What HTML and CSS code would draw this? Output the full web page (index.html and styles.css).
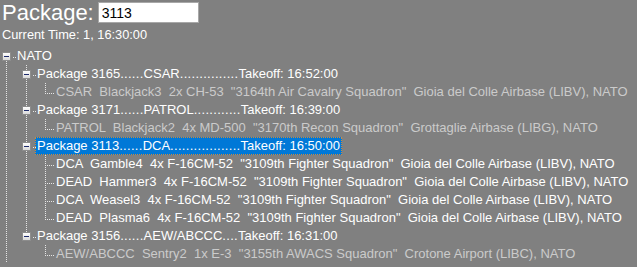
FILE: index.html
```html
<!DOCTYPE html>
<html>
<head>
<meta charset="utf-8">
<link rel="stylesheet" href="styles.css">
</head>
<body>
<div class="header">
  <span class="title">Package:</span>
  <input class="pkg-input" type="text" value="3113">
</div>
<div class="time">Current Time: 1, 16:30:00</div>
<div class="tree">
  <div class="row">
    <span class="own d0 down"><span class="box"></span></span>
    <span class="label">NATO</span>
  </div>

  <div class="row">
    <span class="anc d0 l"></span>
    <span class="own d1 up down"><span class="box"></span></span>
    <span class="label">Package 3165<span class="dots">......</span>CSAR<span class="dots">...............</span>Takeoff: 16:52:00</span>
  </div>
  <div class="row">
    <span class="anc d0 l"></span><span class="anc d1 l"></span>
    <span class="own d2 up leaf"></span>
    <span class="label dim">CSAR  Blackjack3  2x CH-53  "3164th Air Cavalry Squadron"  Gioia del Colle Airbase (LIBV), NATO</span>
  </div>

  <div class="row">
    <span class="anc d0 l"></span>
    <span class="own d1 up down"><span class="box"></span></span>
    <span class="label">Package 3171<span class="dots">......</span>PATROL<span class="dots">............</span>Takeoff: 16:39:00</span>
  </div>
  <div class="row">
    <span class="anc d0 l"></span><span class="anc d1 l"></span>
    <span class="own d2 up leaf"></span>
    <span class="label dim">PATROL  Blackjack2  4x MD-500  "3170th Recon Squadron"  Grottaglie Airbase (LIBG), NATO</span>
  </div>

  <div class="row">
    <span class="anc d0 l"></span>
    <span class="own d1 up down"><span class="box"></span></span>
    <span class="label selected">Package 3113<span class="dots">......</span>DCA<span class="dots">..................</span>Takeoff: 16:50:00</span>
  </div>
  <div class="row">
    <span class="anc d0 l"></span><span class="anc d1 l"></span>
    <span class="own d2 up down leaf"></span>
    <span class="label">DCA  Gamble4  4x F-16CM-52  "3109th Fighter Squadron"  Gioia del Colle Airbase (LIBV), NATO</span>
  </div>
  <div class="row">
    <span class="anc d0 l"></span><span class="anc d1 l"></span>
    <span class="own d2 up down leaf"></span>
    <span class="label">DEAD  Hammer3  4x F-16CM-52  "3109th Fighter Squadron"  Gioia del Colle Airbase (LIBV), NATO</span>
  </div>
  <div class="row">
    <span class="anc d0 l"></span><span class="anc d1 l"></span>
    <span class="own d2 up down leaf"></span>
    <span class="label">DCA  Weasel3  4x F-16CM-52  "3109th Fighter Squadron"  Gioia del Colle Airbase (LIBV), NATO</span>
  </div>
  <div class="row">
    <span class="anc d0 l"></span><span class="anc d1 l"></span>
    <span class="own d2 up leaf"></span>
    <span class="label">DEAD  Plasma6  4x F-16CM-52  "3109th Fighter Squadron"  Gioia del Colle Airbase (LIBV), NATO</span>
  </div>

  <div class="row">
    <span class="anc d0 l"></span>
    <span class="own d1 up"><span class="box"></span></span>
    <span class="label">Package 3156<span class="dots">......</span>AEW/ABCCC<span class="dots">....</span>Takeoff: 16:31:00</span>
  </div>
  <div class="row">
    <span class="anc d0 l"></span><span class="anc d1"></span>
    <span class="own d2 up leaf"></span>
    <span class="label dim">AEW/ABCCC  Sentry2  1x E-3  "3155th AWACS Squadron"  Crotone Airport (LIBC), NATO</span>
  </div>
</div>
</body>
</html>
```

FILE: styles.css
```css
html, body {
  margin: 0;
  padding: 0;
  background: #808080;
  height: 100%;
  overflow: hidden;
}

body {
  font-family: "Liberation Sans", Arial, sans-serif;
  color: #ffffff;
}

.header {
  display: flex;
  align-items: center;
  height: 25px;
  padding-left: 2px;
}

.title {
  font-size: 22px;
  line-height: 25px;
  color: #ffffff;
}

.pkg-input {
  margin: 0 0 0 4px;
  width: 101px;
  height: 21px;
  box-sizing: border-box;
  border: 1px solid #a8a8a8;
  background: #ffffff;
  padding: 0 3px;
  font-family: "Liberation Sans", Arial, sans-serif;
  font-size: 14px;
  color: #000000;
  outline: none;
}

.time {
  font-size: 12.8px;
  line-height: 18px;
  padding-left: 2px;
  margin-top: 1px;
}

.tree {
  margin-top: 3px;
  font-size: 13px;
}

.row {
  display: flex;
  height: 18px;
  align-items: stretch;
}

.anc, .own {
  position: relative;
  flex: none;
}

.anc.d0 { width: 20px; }
.anc.d1 { width: 19px; }
.own { width: 15px; }

.anc.l::before {
  content: "";
  position: absolute;
  left: 6px;
  top: 0;
  width: 1px;
  height: 18px;
  background: repeating-linear-gradient(to bottom, #e6e6e6 0 1px, transparent 1px 2px);
}

.own.up::before {
  content: "";
  position: absolute;
  left: 6px;
  top: 0;
  width: 1px;
  height: 10px;
  background: repeating-linear-gradient(to bottom, #e6e6e6 0 1px, transparent 1px 2px);
}

.own.down::after {
  content: "";
  position: absolute;
  left: 6px;
  top: 10px;
  width: 1px;
  height: 8px;
  background: repeating-linear-gradient(to bottom, #e6e6e6 0 1px, transparent 1px 2px);
}

.own .box::after {
  content: "";
  position: absolute;
  left: 9px;
  top: 4px;
  width: 5px;
  height: 1px;
  background: repeating-linear-gradient(to right, transparent 0 1px, #e6e6e6 1px 2px);
}

.own.leaf {
  background: repeating-linear-gradient(to right, #e6e6e6 0 1px, transparent 1px 2px) no-repeat;
  background-size: 9px 1px;
  background-position: 6px 10px;
}

.box {
  position: absolute;
  left: 2px;
  top: 5px;
  width: 9px;
  height: 9px;
  box-sizing: border-box;
  border: 1px solid #8c8c8c;
  background: linear-gradient(to bottom, #ffffff, #d8d8d8);
  z-index: 1;
}

.box::before {
  content: "";
  position: absolute;
  left: 1px;
  top: 3px;
  width: 5px;
  height: 1px;
  background: #1c2a6b;
}

.label {
  white-space: pre;
  line-height: 18px;
  padding: 0 2px;
  box-sizing: border-box;
  color: #ffffff;
}

.label.dim {
  color: #cbcbcb;
}

.dots {
  letter-spacing: 0.3px;
}

.label.selected {
  background: #0078d7;
  outline: 1px dotted #d08a3a;
  outline-offset: -1px;
}
```
